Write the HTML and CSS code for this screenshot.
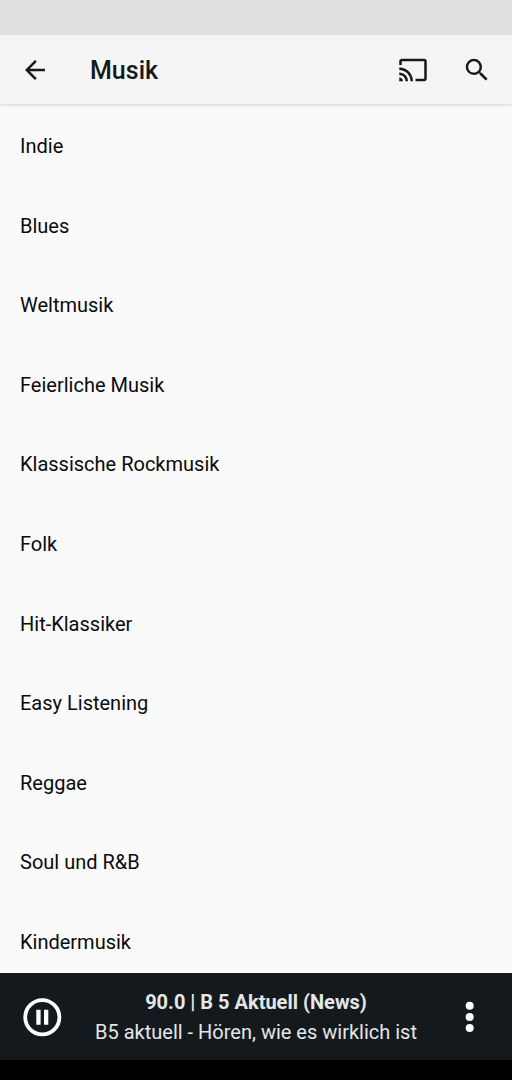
FILE: index.html
```html
<!DOCTYPE html>
<html lang="de">
<head>
  <meta charset="UTF-8">
  <meta name="viewport" content="width=device-width, initial-scale=1.0">
  <title>Musik</title>
  <link rel="stylesheet" href="styles.css">
</head>
<body>
  <div class="status-bar"></div>

  <!-- Kopfzeile -->
  <header class="toolbar">
    <button class="icon-button" type="button" aria-label="Zurück">
      <svg class="icon" viewBox="0 0 24 24"><path d="M20 11H7.83l5.59-5.59L12 4l-8 8 8 8 1.41-1.41L7.83 13H20v-2z"/></svg>
    </button>
    <h1 class="title">Musik</h1>
    <button class="icon-button" type="button" aria-label="Streamen">
      <svg class="icon" viewBox="0 0 24 24"><path d="M21 3H3c-1.100 0-2 .9-2 2v3h2V5h18v14h-7v2h7c1.100 0 2-.9 2-2V5c0-1.100-.9-2-2-2zM1 18v3h3c0-1.660-1.340-3-3-3zm0-4v2c2.760 0 5 2.240 5 5h2c0-3.870-3.130-7-7-7zm0-4v2c4.970 0 9 4.030 9 9h2c0-6.080-4.930-11-11-11z"/></svg>
    </button>
    <button class="icon-button" type="button" aria-label="Suchen">
      <svg class="icon" viewBox="0 0 24 24"><path d="M15.500 14h-.79l-.28-.27A6.471 6.471 0 0 0 16 9.500 6.500 6.500 0 1 0 9.500 16c1.610 0 3.090-.59 4.230-1.570l.27.28v.79l5 4.990L20.490 19l-4.990-5zm-6 0C7.010 14 5 11.990 5 9.500S7.010 5 9.500 5 14 7.010 14 9.500 11.990 14 9.500 14z"/></svg>
    </button>
  </header>

  <!-- Genres -->
  <main class="content">
    <ul class="genre-list">
      <li><a class="genre" href="#">Indie</a></li>
      <li><a class="genre" href="#">Blues</a></li>
      <li><a class="genre" href="#">Weltmusik</a></li>
      <li><a class="genre" href="#">Feierliche Musik</a></li>
      <li><a class="genre" href="#">Klassische Rockmusik</a></li>
      <li><a class="genre" href="#">Folk</a></li>
      <li><a class="genre" href="#">Hit-Klassiker</a></li>
      <li><a class="genre" href="#">Easy Listening</a></li>
      <li><a class="genre" href="#">Reggae</a></li>
      <li><a class="genre" href="#">Soul und R&amp;B</a></li>
      <li><a class="genre" href="#">Kindermusik</a></li>
    </ul>
  </main>

  <!-- Player -->
  <footer class="player">
    <button class="player-button" type="button" aria-label="Pause">
      <svg class="icon-pause" viewBox="0 0 40 40"><circle cx="20.300" cy="20.200" r="17.100" fill="none" stroke="currentColor" stroke-width="3.800"/><path d="M14.300 12.700h4.300v15h-4.300zM22 12.700h4.300v15H22z"/></svg>
    </button>
    <div class="now-playing">
      <div class="station">90.0 | B 5 Aktuell (News)</div>
      <div class="subtitle">B5 aktuell - Hören, wie es wirklich ist</div>
    </div>
    <button class="player-button" type="button" aria-label="Mehr">
      <svg class="icon-more" viewBox="0 0 10 32"><circle cx="4.700" cy="4.700" r="4"/><circle cx="4.700" cy="15.900" r="4"/><circle cx="4.700" cy="27.100" r="4"/></svg>
    </button>
  </footer>
  <div class="nav-bar"></div>
</body>
</html>
```

FILE: styles.css
```css
* {
  box-sizing: border-box;
}

body {
  display: flex;
  flex-direction: column;
  height: 100vh;
  margin: 0;
  background-color: #fafafa;
  color: #14191d;
  font-family: Roboto, sans-serif;
}

button {
  display: flex;
  align-items: center;
  justify-content: center;
  padding: 0;
  border: none;
  background: none;
  color: inherit;
  cursor: pointer;
}

svg {
  display: block;
  fill: currentColor;
}

.status-bar {
  flex: none;
  height: 35px;
  background-color: #e0e0e0;
}

.toolbar {
  display: flex;
  flex: none;
  align-items: center;
  height: 69px;
  padding-right: 6px;
  background-color: #f5f5f5;
  box-shadow: 0 2px 2px rgba(0, 0, 0, 0.1);
}

.icon-button {
  width: 64px;
  height: 64px;
  padding-left: 6px;
}

.icon {
  width: 30px;
  height: 30px;
}

.title {
  flex: 1;
  margin: 0;
  padding: 2px 0 0 26px;
  font-size: 25px;
  font-weight: 500;
  line-height: 32px;
}

.content {
  flex: 1;
  min-height: 0;
  overflow: hidden;
}

.genre-list {
  display: flex;
  flex-direction: column;
  justify-content: space-between;
  gap: 48px;
  min-height: 100%;
  margin: 0;
  padding: 30px 0 19px;
  list-style: none;
}

.genre {
  display: block;
  padding: 0 20px;
  color: #0a0a0a;
  font-size: 20px;
  line-height: 24px;
  text-decoration: none;
}

.player {
  display: flex;
  flex: none;
  align-items: center;
  height: 87px;
  background-color: #14191d;
  color: #fff;
}

.player-button {
  width: 84px;
  height: 84px;
}

.icon-pause {
  width: 40px;
  height: 40px;
}

.icon-more {
  width: 10px;
  height: 32px;
}

.now-playing {
  flex: 1;
  min-width: 0;
  color: #e4e6e8;
  font-size: 20px;
  line-height: 30px;
  text-align: center;
  white-space: nowrap;
}

.station {
  font-weight: 700;
}

.nav-bar {
  flex: none;
  height: 20px;
  background-color: #000;
}
```
